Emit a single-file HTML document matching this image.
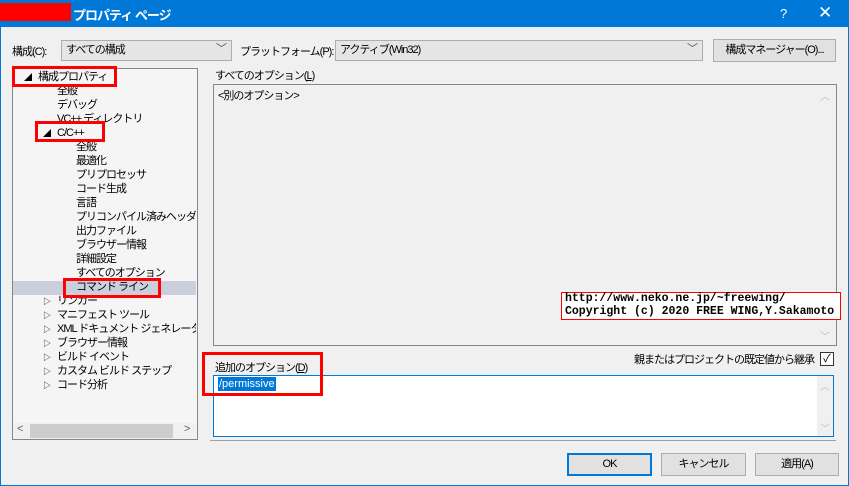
<!DOCTYPE html>
<html><head><meta charset="utf-8"><style>
*{margin:0;padding:0;box-sizing:border-box}
body{width:849px;height:486px;background:#f0f0f0;font-family:"Liberation Sans","Noto Sans CJK JP",sans-serif;font-size:11px;letter-spacing:-1px;color:#000;position:relative;overflow:hidden}
.a{position:absolute;white-space:nowrap}
.red{position:absolute;border:3px solid #f00}
.combo{position:absolute;height:21px;border:1px solid #adadad;background:#e5e5e5;padding:2px 4px;line-height:15px;white-space:nowrap}
.btn{position:absolute;height:23px;border:1px solid #adadad;background:#e1e1e1;text-align:center;line-height:21px;white-space:nowrap}
.t{position:absolute;line-height:14px;height:14px}
.arr{position:absolute;font-size:8px}
</style></head><body>
<div class="a" style="left:0;top:0;width:849px;height:27px;background:#0078d7"></div>
<div class="a" style="left:0;top:0;width:1px;height:486px;background:#0078d7"></div>
<div class="a" style="right:0;top:0;width:1px;height:486px;background:#0078d7"></div>
<div class="a" style="left:0;bottom:0;width:849px;height:1px;background:#0078d7"></div>
<div class="a" style="left:0;top:3px;width:71px;height:18px;background:#f00"></div>
<div class="a" style="left:73px;top:5px;color:#fff;font-size:13px;font-weight:bold">プロパティ ページ</div>
<div class="a" style="left:780px;top:6px;color:#fff;font-size:13px">?</div>
<div class="a" style="left:818px;top:3px;color:#fff;font-size:17px">✕</div>

<div class="a" style="left:12px;top:43px">構成(C):</div>
<div class="combo" style="left:61px;top:40px;width:171px">すべての構成<span style="position:absolute;right:5px;top:1px;color:#555">﹀</span></div>
<div class="a" style="left:240px;top:43px">プラットフォーム(P):</div>
<div class="combo" style="left:335px;top:40px;width:368px">アクティブ(Win32)<span style="position:absolute;right:5px;top:1px;color:#555">﹀</span></div>
<div class="btn" style="left:713px;top:39px;width:123px">構成マネージャー(O)...</div>

<div class="a" style="left:12px;top:68px;width:186px;height:372px;border:1px solid #828790;background:#f5f5f5"></div>
<div class="a" style="left:13px;top:281px;width:183px;height:14px;background:#cccedb"></div>
<div class="a" style="left:13px;top:423px;width:183px;height:16px;background:#f0f0f0"></div>
<div class="a" style="left:30px;top:424px;width:143px;height:14px;background:#cdcdcd"></div>
<div class="a" style="left:17px;top:423px;color:#606060">&lt;</div>
<div class="a" style="left:184px;top:423px;color:#606060">&gt;</div>
<div style="position:absolute;left:0;top:70px">
<div class="arr" style="left:24px;top:2px">◢</div><div class="t a" style="left:38px;top:0">構成プロパティ</div>
<div class="t a" style="left:57px;top:14px">全般</div>
<div class="t a" style="left:57px;top:28px">デバッグ</div>
<div class="t a" style="left:57px;top:42px">VC++ ディレクトリ</div>
<div class="arr" style="left:43px;top:58px">◢</div><div class="t a" style="left:57px;top:56px">C/C++</div>
<div class="t a" style="left:76px;top:70px">全般</div>
<div class="t a" style="left:76px;top:84px">最適化</div>
<div class="t a" style="left:76px;top:98px">プリプロセッサ</div>
<div class="t a" style="left:76px;top:112px">コード生成</div>
<div class="t a" style="left:76px;top:126px">言語</div>
<div class="t a" style="left:76px;top:140px;width:120px;overflow:hidden">プリコンパイル済みヘッダー</div>
<div class="t a" style="left:76px;top:154px">出力ファイル</div>
<div class="t a" style="left:76px;top:168px">ブラウザー情報</div>
<div class="t a" style="left:76px;top:182px">詳細設定</div>
<div class="t a" style="left:76px;top:196px">すべてのオプション</div>
<div class="t a" style="left:76px;top:210px">コマンド ライン</div>
<div class="arr" style="left:43px;top:226px">▷</div><div class="t a" style="left:57px;top:224px">リンカー</div>
<div class="arr" style="left:43px;top:240px">▷</div><div class="t a" style="left:57px;top:238px">マニフェスト ツール</div>
<div class="arr" style="left:43px;top:254px">▷</div><div class="t a" style="left:57px;top:252px;width:139px;overflow:hidden">XML ドキュメント ジェネレーター</div>
<div class="arr" style="left:43px;top:268px">▷</div><div class="t a" style="left:57px;top:266px">ブラウザー情報</div>
<div class="arr" style="left:43px;top:282px">▷</div><div class="t a" style="left:57px;top:280px">ビルド イベント</div>
<div class="arr" style="left:43px;top:296px">▷</div><div class="t a" style="left:57px;top:294px">カスタム ビルド ステップ</div>
<div class="arr" style="left:43px;top:310px">▷</div><div class="t a" style="left:57px;top:308px">コード分析</div>
</div>

<div class="a" style="left:215px;top:67px">すべてのオプション(<u>L</u>)</div>
<div class="a" style="left:213px;top:84px;width:624px;height:262px;border:1px solid #828790;background:#f0f0f0"></div>
<div class="a" style="left:218px;top:87px">&lt;別のオプション&gt;</div>
<div class="a" style="left:820px;top:88px;color:#bbb;font-size:10px">︿</div>
<div class="a" style="left:820px;top:328px;color:#bbb;font-size:10px">﹀</div>
<div class="a" style="left:561px;top:292px;width:280px;height:28px;border:1px solid #f00;background:#fff"></div>
<div class="a" style="left:565px;top:292px;font-family:'Liberation Mono',monospace;font-weight:bold;font-size:11.5px;letter-spacing:0;line-height:13px">http://www.neko.ne.jp/~freewing/<br>Copyright (c) 2020 FREE WING,Y.Sakamoto</div>

<div class="a" style="left:215px;top:359px">追加のオプション(<u>D</u>)</div>
<div class="a" style="right:35px;top:351px">親またはプロジェクトの既定値から継承</div>
<div class="a" style="left:820px;top:352px;width:14px;height:14px;border:1px solid #333;background:#fff;font-size:11px;letter-spacing:0;line-height:12px;text-align:center">✓</div>
<div class="a" style="left:213px;top:375px;width:621px;height:62px;border:1px solid #0078d7;background:#fff"></div>
<div class="a" style="left:817px;top:376px;width:16px;height:60px;background:#f0f0f0"></div>
<div class="a" style="left:820px;top:378px;color:#bbb;font-size:10px">︿</div>
<div class="a" style="left:820px;top:420px;color:#bbb;font-size:10px">﹀</div>
<div class="a" style="left:218px;top:377px;background:#0078d7;color:#fff;line-height:14px;padding:0 1px;letter-spacing:0">/permissive</div>
<div class="a" style="left:210px;top:440px;width:626px;height:1px;background:#a0a0a0"></div>

<div class="btn" style="left:567px;top:453px;width:85px;border:2px solid #0078d7;line-height:19px">OK</div>
<div class="btn" style="left:661px;top:453px;width:85px">キャンセル</div>
<div class="btn" style="left:755px;top:453px;width:84px">適用(A)</div>

<div class="red" style="left:12px;top:66px;width:105px;height:21px"></div>
<div class="red" style="left:35px;top:121px;width:70px;height:21px"></div>
<div class="red" style="left:63px;top:278px;width:98px;height:20px"></div>
<div class="red" style="left:202px;top:352px;width:121px;height:44px"></div>
</body></html>
